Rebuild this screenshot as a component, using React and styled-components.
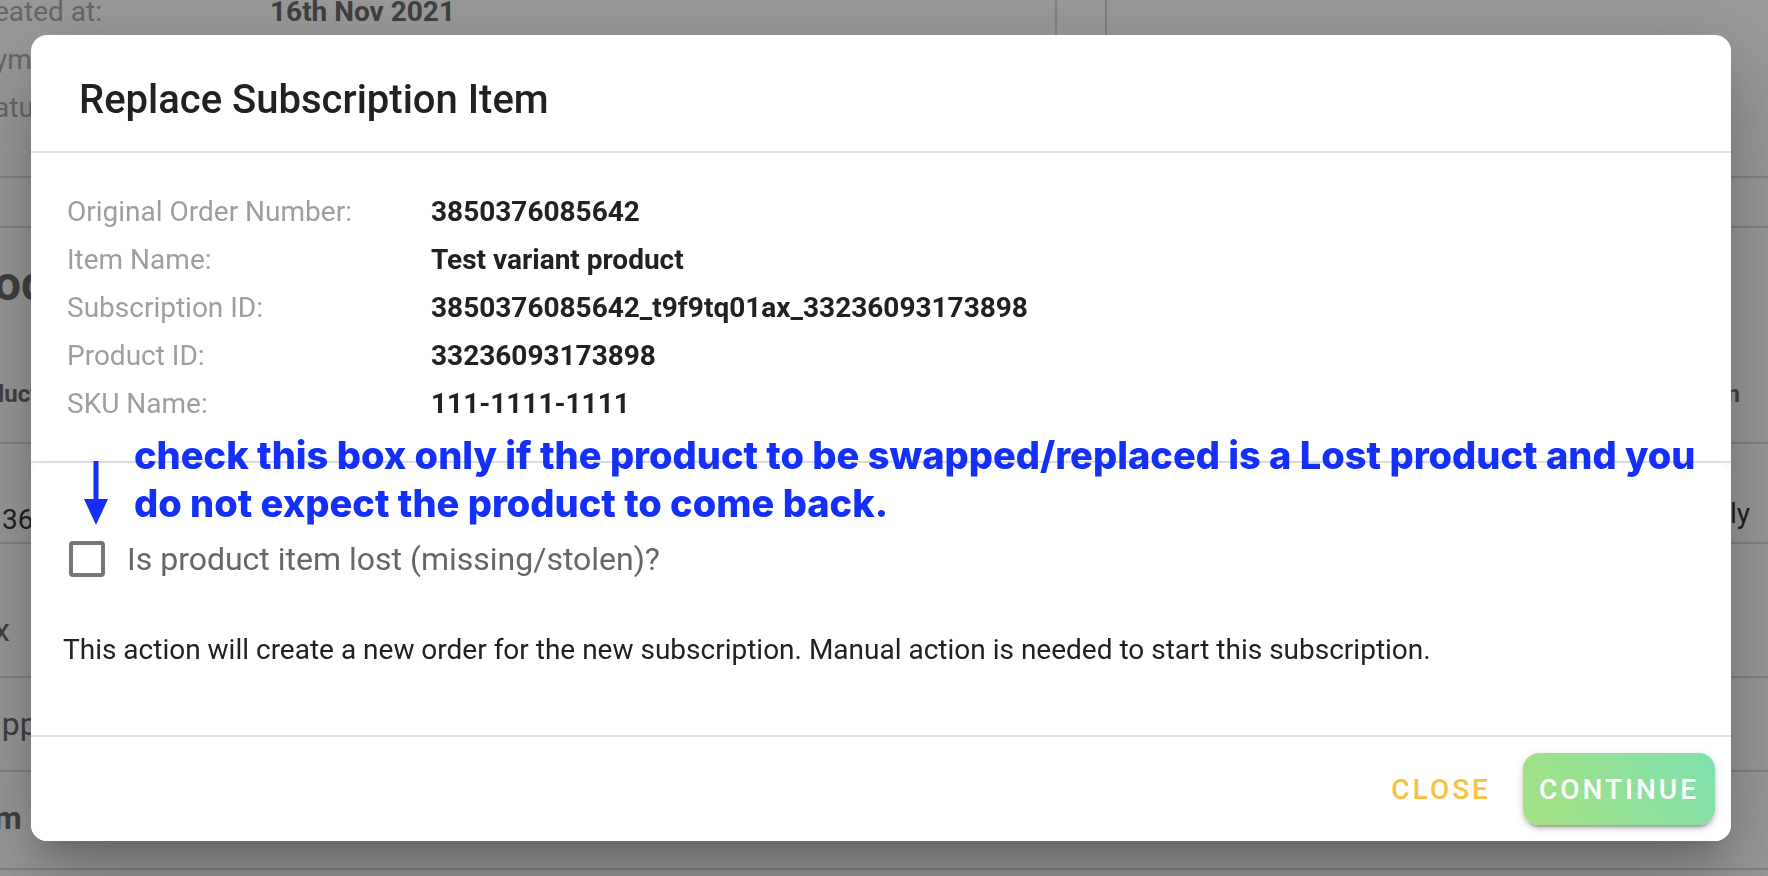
import React, { useState } from "react";
import styled, { createGlobalStyle } from "styled-components";

const details = [
  { label: "Original Order Number:", value: "3850376085642" },
  { label: "Item Name:", value: "Test variant product" },
  { label: "Subscription ID:", value: "3850376085642_t9f9tq01ax_33236093173898" },
  { label: "Product ID:", value: "33236093173898" },
  { label: "SKU Name:", value: "111-1111-1111" },
];

const App = () => {
  const [lost, setLost] = useState(false);

  return (
    <>
      <GlobalStyle />
      <Page>
        <Summary>
          <SummaryCard>
            <SummaryRow>
              <Muted>eated at:</Muted>
              <Strong>16th Nov 2021</Strong>
            </SummaryRow>
            <SummaryRow>
              <Muted>ym</Muted>
            </SummaryRow>
            <SummaryRow>
              <Muted>atu</Muted>
            </SummaryRow>
          </SummaryCard>
          <SideCard />
        </Summary>
        <Band height="50px" />
        <Band height="216px">
          <PageTitle>od</PageTitle>
          <PageHead>
            <span>luct</span>
            <span>n</span>
          </PageHead>
        </Band>
        <Band height="100px">
          <PageRow>
            <Cell top="60px">36</Cell>
            <Cell top="54px">ly</Cell>
          </PageRow>
        </Band>
        <Band height="134px">
          <Soft top="62px">x</Soft>
        </Band>
        <Band height="94px">
          <Soft top="22px">ipp</Soft>
        </Band>
        <Band height="98px">
          <Total>m</Total>
        </Band>
      </Page>
      <Overlay>
        <Dialog role="dialog" aria-labelledby="dialog-title">
          <Header>
            <Title id="dialog-title">Replace Subscription Item</Title>
          </Header>
          <Details>
            {details.map(({ label, value }) => (
              <React.Fragment key={label}>
                <dt>{label}</dt>
                <dd>{value}</dd>
              </React.Fragment>
            ))}
          </Details>
          <Options>
            <Note>
              <Arrow viewBox="0 0 24 64" aria-hidden="true">
                <path d="M9.500 0h5v38H24L12 64 0 38h9.500z" />
              </Arrow>
              <NoteText>
                check this box only if the product to be swapped/replaced is a
                Lost product and you
                <br />
                do not expect the product to come back.
              </NoteText>
            </Note>
            <CheckLabel htmlFor="lost">
              <Checkbox
                id="lost"
                type="checkbox"
                checked={lost}
                onChange={(e) => setLost(e.target.checked)}
              />
              Is product item lost (missing/stolen)?
            </CheckLabel>
            <Message>
              This action will create a new order for the new subscription.
              Manual action is needed to start this subscription.
            </Message>
          </Options>
          <Footer>
            <Button type="button">Close</Button>
            <ContinueButton type="button">Continue</ContinueButton>
          </Footer>
        </Dialog>
      </Overlay>
    </>
  );
};

const GlobalStyle = createGlobalStyle`
  * {
    box-sizing: border-box;
  }

  body {
    margin: 0;
    overflow: hidden;
    font-family: Roboto, sans-serif;
    font-size: 28px;
    line-height: 48px;
    color: #212121;
    background: #9b9b9b;
  }
`;

const Page = styled.main`
  height: 100vh;
  margin-left: -6px;
  overflow: hidden;
`;

const Summary = styled.section`
  display: flex;
  gap: 48px;
  height: 178px;
  border-bottom: 2px solid #848484;
`;

const SummaryCard = styled.div`
  width: 1063px;
  height: 134px;
  margin-top: -12px;
  border-right: 2px solid #848484;
`;

const SideCard = styled.div`
  flex: 1;
  height: 122px;
  border-left: 2px solid #848484;
`;

const SummaryRow = styled.div`
  display: flex;
`;

const Muted = styled.span`
  width: 276px;
  color: #686868;
`;

const Strong = styled.strong`
  color: #414141;
`;

const Band = styled.section`
  height: ${(props) => props.height};
  border-bottom: 2px solid #848484;
`;

const PageTitle = styled.h1`
  margin: 0;
  padding: 32px 0 62px;
  font-size: 48px;
  font-weight: 700;
  color: #414141;
`;

const PageHead = styled.div`
  display: flex;
  justify-content: space-between;
  padding: 0 28px 0 4px;
  font-size: 24px;
  font-weight: 700;
  color: #444444;
`;

const PageRow = styled.div`
  display: flex;
  justify-content: space-between;
  padding: 0 18px 0 8px;
`;

const Cell = styled.span`
  padding-top: ${(props) => props.top};
  line-height: 32px;
`;

const Soft = styled.p`
  margin: 0;
  padding-top: ${(props) => props.top};
  font-size: 32px;
  color: #414141;
`;

const Total = styled.strong`
  display: block;
  padding-top: 22px;
  font-size: 32px;
  color: #414141;
`;

const Overlay = styled.div`
  position: fixed;
  inset: 0;
  display: flex;
  align-items: flex-start;
  padding: 35px 37px 35px 31px;
`;

const Dialog = styled.section`
  flex: 1;
  overflow: hidden;
  border-radius: 16px;
  background: #fff;
  box-shadow: 0 22px 30px -14px rgba(0, 0, 0, 0.2),
    0 48px 76px 6px rgba(0, 0, 0, 0.14), 0 18px 92px 16px rgba(0, 0, 0, 0.12);
`;

const Header = styled.header`
  padding: 33px 48px 19px;
  border-bottom: 2px solid #e0e0e0;
`;

const Title = styled.h2`
  margin: 0;
  font-size: 40px;
  font-weight: 500;
  line-height: 64px;
`;

const Details = styled.dl`
  display: grid;
  grid-template-columns: 364px 1fr;
  margin: 0;
  padding: 35px 36px 33px;
  border-bottom: 2px solid #e0e0e0;

  dt {
    color: #9e9e9e;
  }

  dd {
    margin: 0;
    font-weight: 700;
  }
`;

const Options = styled.div`
  position: relative;
  padding: 72px 32px 61px;
  border-radius: 16px 16px 0 0;
  box-shadow: 0 2px 10px rgba(0, 0, 0, 0.08);
`;

/* The note sits over the divider above the options. */
const Note = styled.div`
  position: absolute;
  top: -32px;
  left: 53px;
  right: 0;
  display: flex;
  gap: 26px;
  color: #1430f8;
`;

const Arrow = styled.svg`
  flex: none;
  width: 24px;
  height: 64px;
  margin-top: 30px;
  fill: currentColor;
`;

const NoteText = styled.p`
  margin: 0;
  white-space: nowrap;
  font-family: Inter, sans-serif;
  font-size: 38px;
  font-weight: 800;
`;

const CheckLabel = styled.label`
  display: flex;
  align-items: center;
  gap: 22px;
  padding-left: 6px;
  font-size: 32px;
  color: #666666;
`;

const Checkbox = styled.input`
  appearance: none;
  width: 36px;
  height: 36px;
  margin: 0;
  border: 4px solid #757575;
  border-radius: 4px;
  background: #fff;

  &:checked {
    background: #757575;
  }
`;

const Message = styled.p`
  margin: 43px 0 0;
`;

const Footer = styled.footer`
  position: relative;
  display: flex;
  justify-content: flex-end;
  gap: 16px;
  padding: 16px;
  border-top: 2px solid #e0e0e0;
  background: #fff;
`;

const Button = styled.button`
  height: 72px;
  padding: 0 16px;
  border: none;
  border-radius: 16px;
  background: transparent;
  font-family: Roboto, sans-serif;
  font-size: 28px;
  font-weight: 500;
  letter-spacing: 3px;
  text-transform: uppercase;
  color: #f7c242;
  cursor: pointer;
`;

const ContinueButton = styled(Button)`
  color: #fff;
  background: linear-gradient(60deg, #a5e182, #7fe0ac);
  box-shadow: 0 6px 2px -4px rgba(0, 0, 0, 0.2), 0 4px 4px rgba(0, 0, 0, 0.14),
    0 2px 10px rgba(0, 0, 0, 0.12);
`;

export default App;
